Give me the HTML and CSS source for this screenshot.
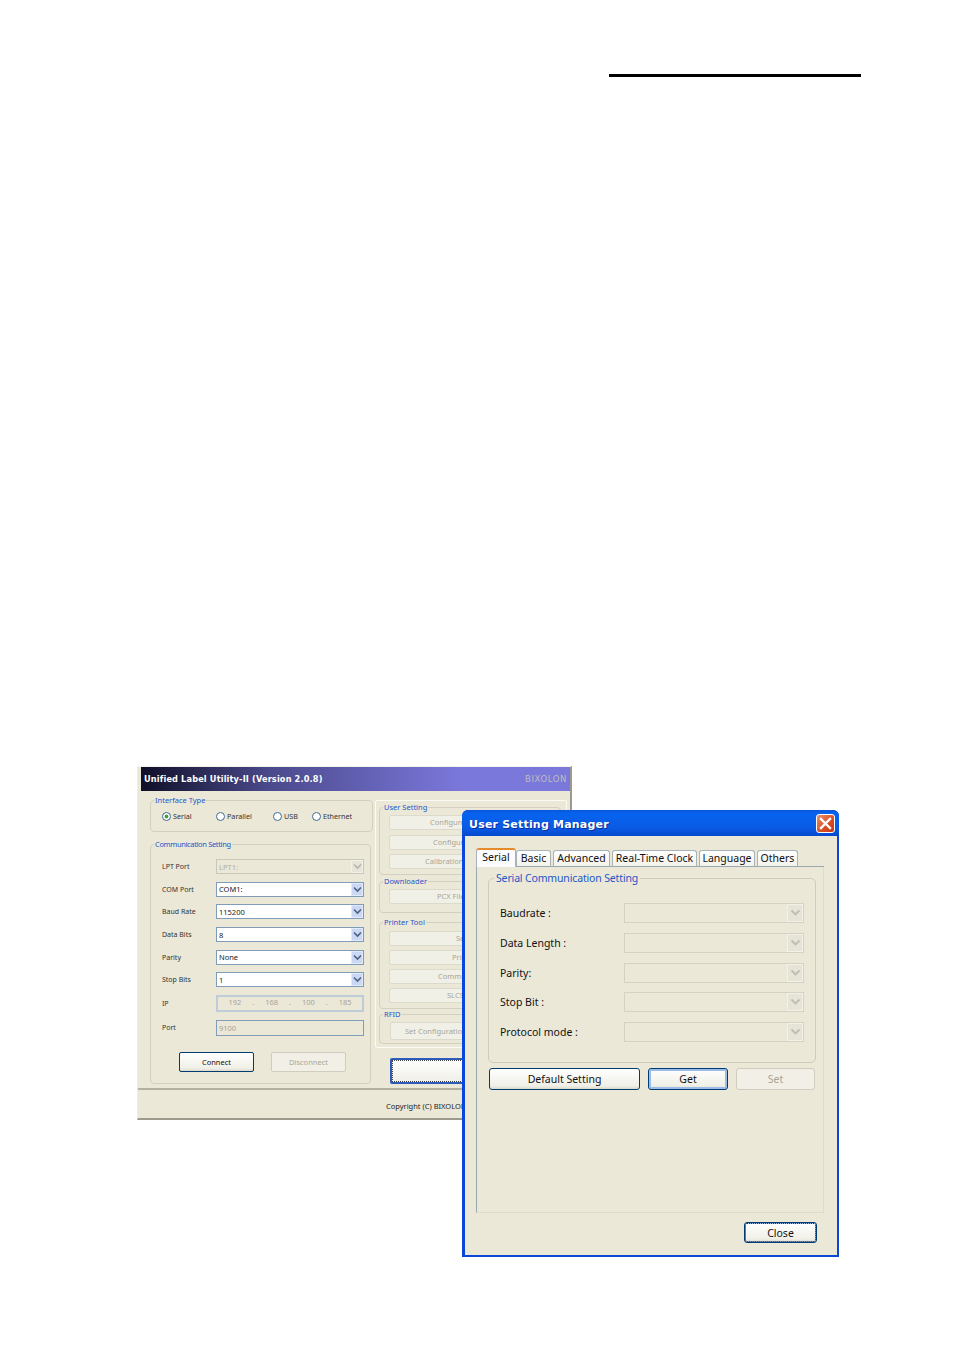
FILE: index.html
```html
<!DOCTYPE html>
<html lang="en">
<head>
<meta charset="utf-8">
<title>Unified Label Utility-II</title>
<link rel="stylesheet" href="styles.css">
</head>
<body>
<div class="page">
  <div class="rule"></div>

  <section class="win-back">
    <header class="back-title"><span>Unified Label Utility-II (Version 2.0.8)</span><span class="brand">BIXOLON</span></header>
    <div class="back-body">
      <div class="back-left">
        <fieldset class="grp grp-iface">
          <legend>Interface Type</legend>
          <div class="radios">
            <label class="radio r-serial"><i class="dot on"></i>Serial</label>
            <label class="radio r-par"><i class="dot"></i>Parallel</label>
            <label class="radio r-usb"><i class="dot"></i>USB</label>
            <label class="radio"><i class="dot"></i>Ethernet</label>
          </div>
        </fieldset>
        <fieldset class="grp grp-comm">
          <legend>Communication Setting</legend>
          <div class="form">
            <span class="lb">LPT Port</span>
            <div class="cb dis"><span>LPT1:</span><b class="drop"><svg width="9" height="7" viewBox="0 0 9 7"><path d="M1 1.5l3.5 3.5 3.5-3.5" fill="none" stroke="#b4b4aa" stroke-width="1.6"/></svg></b></div>
            <span class="lb">COM Port</span>
            <div class="cb"><span>COM1:</span><b class="drop"><svg width="9" height="7" viewBox="0 0 9 7"><path d="M1 1.5l3.5 3.5 3.5-3.5" fill="none" stroke="#4d6185" stroke-width="1.6"/></svg></b></div>
            <span class="lb">Baud Rate</span>
            <div class="cb"><span>115200</span><b class="drop"><svg width="9" height="7" viewBox="0 0 9 7"><path d="M1 1.5l3.5 3.5 3.5-3.5" fill="none" stroke="#4d6185" stroke-width="1.6"/></svg></b></div>
            <span class="lb">Data Bits</span>
            <div class="cb"><span>8</span><b class="drop"><svg width="9" height="7" viewBox="0 0 9 7"><path d="M1 1.5l3.5 3.5 3.5-3.5" fill="none" stroke="#4d6185" stroke-width="1.6"/></svg></b></div>
            <span class="lb">Parity</span>
            <div class="cb"><span>None</span><b class="drop"><svg width="9" height="7" viewBox="0 0 9 7"><path d="M1 1.5l3.5 3.5 3.5-3.5" fill="none" stroke="#4d6185" stroke-width="1.6"/></svg></b></div>
            <span class="lb">Stop Bits</span>
            <div class="cb"><span>1</span><b class="drop"><svg width="9" height="7" viewBox="0 0 9 7"><path d="M1 1.5l3.5 3.5 3.5-3.5" fill="none" stroke="#4d6185" stroke-width="1.6"/></svg></b></div>
            <span class="lb">IP</span>
            <div class="tx ip"><span>192</span><span>.</span><span>168</span><span>.</span><span>100</span><span>.</span><span>185</span></div>
            <span class="lb">Port</span>
            <div class="tx"><span>9100</span></div>
          </div>
          <div class="conn">
            <button class="xbtn primary" type="button">Connect</button>
            <button class="xbtn off" type="button">Disconnect</button>
          </div>
        </fieldset>
      </div>
      <div class="back-right">
        <div class="panel">
          <fieldset class="grp g-user">
            <legend>User Setting</legend>
            <div class="rbtn p40 mb5">Configure</div>
            <div class="rbtn p43 mb4">Configur</div>
            <div class="rbtn p35">Calibration S</div>
          </fieldset>
          <fieldset class="grp g-down">
            <legend>Downloader</legend>
            <div class="rbtn p47">PCX File</div>
          </fieldset>
          <fieldset class="grp g-tool">
            <legend>Printer Tool</legend>
            <div class="rbtn p66 mb4">Se</div>
            <div class="rbtn p62 mb4">Prin</div>
            <div class="rbtn p48 mb4">Commu</div>
            <div class="rbtn p57">SLCS</div>
          </fieldset>
          <fieldset class="grp g-rfid">
            <legend>RFID</legend>
            <div class="rbtn p14 tall">Set Configuration</div>
          </fieldset>
        </div>
        <div class="bigbtn"></div>
      </div>
    </div>
    <footer class="back-foot">Copyright (C) BIXOLON</footer>
  </section>

  <section class="win-dlg">
    <header class="dlg-title">
      <span>User Setting Manager</span>
      <button class="x" type="button" aria-label="Close"><svg width="13" height="13" viewBox="0 0 13 13"><path d="M2 2l9 9M11 2l-9 9" stroke="#fff" stroke-width="2.4" stroke-linecap="square"/></svg></button>
    </header>
    <div class="dlg-body">
      <nav class="tabs">
        <span class="tab active">Serial</span>
        <span class="tab t-basic">Basic</span>
        <span class="tab t-adv">Advanced</span>
        <span class="tab t-rtc">Real-Time Clock</span>
        <span class="tab t-lang">Language</span>
        <span class="tab t-oth">Others</span>
      </nav>
      <div class="pane">
        <fieldset class="dgrp">
          <legend>Serial Communication Setting</legend>
          <div class="dform">
            <span class="dl">Baudrate :</span>
            <div class="dcb"><b class="ddrop"><svg width="11" height="8" viewBox="0 0 11 8"><path d="M1.5 1.5l4 4 4-4" fill="none" stroke="#bdbdb3" stroke-width="1.8"/></svg></b></div>
            <span class="dl">Data Length :</span>
            <div class="dcb"><b class="ddrop"><svg width="11" height="8" viewBox="0 0 11 8"><path d="M1.5 1.5l4 4 4-4" fill="none" stroke="#bdbdb3" stroke-width="1.8"/></svg></b></div>
            <span class="dl">Parity:</span>
            <div class="dcb"><b class="ddrop"><svg width="11" height="8" viewBox="0 0 11 8"><path d="M1.5 1.5l4 4 4-4" fill="none" stroke="#bdbdb3" stroke-width="1.8"/></svg></b></div>
            <span class="dl">Stop Bit :</span>
            <div class="dcb"><b class="ddrop"><svg width="11" height="8" viewBox="0 0 11 8"><path d="M1.5 1.5l4 4 4-4" fill="none" stroke="#bdbdb3" stroke-width="1.8"/></svg></b></div>
            <span class="dl">Protocol mode :</span>
            <div class="dcb"><b class="ddrop"><svg width="11" height="8" viewBox="0 0 11 8"><path d="M1.5 1.5l4 4 4-4" fill="none" stroke="#bdbdb3" stroke-width="1.8"/></svg></b></div>
          </div>
        </fieldset>
        <div class="dbtns">
          <button class="dbtn primary w-def" type="button">Default Setting</button>
          <button class="dbtn primary focus w-get" type="button">Get</button>
          <button class="dbtn off w-set" type="button">Set</button>
        </div>
      </div>
      <div class="dlg-foot">
        <button class="dbtn primary dotted w-close" type="button">Close</button>
      </div>
    </div>
  </section>
</div>
</body>
</html>
```
FILE: styles.css
```css
* { box-sizing: border-box; }
html, body { margin: 0; background: #fff; }
.page { position: relative; width: 955px; height: 1350px; overflow: hidden; padding: 74px 94px 0 609px; font-family: "Noto Sans", "DejaVu Sans", sans-serif; }
.rule { height: 3px; background: #000; }

/* back window */
.win-back { position: absolute; left: 137px; top: 766px; width: 435px; height: 354px; background: #ebe8d8; border-top: 1px solid #f4f3ea; border-left: 1px solid #f1efe3; border-right: 2px solid #9c9a8c; border-bottom: 2px solid #9c9a8c; font-size: 7px; color: #333; }
.back-title { margin: 0 0 0 3px; height: 24px; padding: 0 3px; display: flex; align-items: center; justify-content: space-between; background: linear-gradient(90deg, #0f0f28 0%, #4b4a8c 30%, #7b78dc 75%); color: #fff; font: bold 8.2px "DejaVu Sans", sans-serif; letter-spacing: .15px; }
.brand { color: #bcbcbc; font-weight: normal; font-size: 8.5px; letter-spacing: .6px; }
.back-body { display: flex; padding: 5px 0 0 12px; height: 299px; border-bottom: 2px solid #b3b1a2; }
.back-left { width: 224px; }
.back-right { width: 192px; margin-left: 1px; padding-top: 4px; }
.back-foot { padding: 11px 0 0 248px; font-size: 7.5px; color: #222; }

.grp { margin: 0; padding: 0; border: 1px solid #d3d0bf; border-radius: 4px; min-width: 0; }
.grp legend { margin-left: 3px; padding: 0 1px; color: #1f55c8; font-size: 7.5px; line-height: 9px; }
.grp-iface { width: 223px; height: 36px; }
.radios { display: flex; padding: 6px 0 0 11px; align-items: center; }
.radio { display: flex; align-items: center; gap: 2px; font-size: 7.2px; }
.r-serial { width: 54px; }
.r-par { width: 57px; }
.r-usb { width: 39px; }
.dot { width: 9px; height: 9px; border: 1px solid #3f6c94; border-radius: 50%; background: #fff; display: block; }
.dot.on { background: radial-gradient(circle, #3aa63a 0 1.7px, #fff 2.2px); }
.grp-comm { width: 221px; height: 244px; margin-top: 8px; }
.grp-comm legend { letter-spacing: -.35px; }
.form { display: grid; grid-template-columns: 54px 148px; grid-template-rows: 15px 15px 15px 15px 15px 15px 17px 16px; row-gap: 7.7px; padding: 10px 0 0 11px; align-items: center; font-size: 7px; }
.cb { height: 15px; display: flex; align-items: center; justify-content: space-between; background: #fff; border: 1px solid #7f9db9; padding-left: 2px; font-size: 7.5px; color: #222; }
.cb.dis { background: #ebe8d8; border-color: #c9c7ba; color: #aeaca0; }
.drop { width: 12px; height: 13px; display: flex; align-items: center; justify-content: center; background: #cad8f4; border: 1px solid #e3eafb; }
.cb.dis .drop { background: #e6e4d6; border-color: #f2f1e8; }
.tx { height: 100%; display: flex; align-items: center; background: #ebe8d8; border: 1px solid #7f9db9; padding: 0 2px; color: #a5a398; font-size: 7.5px; }
.ip { justify-content: space-around; padding: 0 5px 3px; border: 2px solid #bfcdd9; }
.conn { display: flex; gap: 17px; padding: 16px 0 0 28px; }
.xbtn { width: 75px; height: 20px; padding: 0; border-radius: 2px; font: 7.5px "Noto Sans", sans-serif; }
.primary { border: 1px solid #003c74; background: linear-gradient(#fff, #f0efe7 85%, #dcd8c9); color: #111; }
.off { border: 1px solid #cfcdbe; background: #f2f0e6; color: #a7a598; }

.panel { width: 192px; height: 248px; border: 1px solid #fbfbf6; border-radius: 2px; padding: 2px 5px 0 3px; }
.g-user { height: 72px; }
.g-down { height: 36px; margin-top: 2px; }
.g-tool { height: 91px; margin-top: 5px; padding-top: 1px; }
.g-rfid { height: 34px; margin-top: 1px; }
.rbtn { height: 15px; margin: 3px 7px 0 9px; background: #f1f0e6; border: 1px solid #dcdacb; border-radius: 2px; color: #a7a598; font-size: 7.5px; line-height: 13px; white-space: nowrap; overflow: hidden; }
.rbtn.tall { height: 18px; line-height: 16px; margin-left: 10px; }
.mb5 { margin-bottom: 5px; }
.mb4 { margin-bottom: 4px; }
.rbtn.mb4 + .rbtn, .rbtn.mb5 + .rbtn { margin-top: 0; }
.p14 { padding-left: 14px; }
.p35 { padding-left: 35px; }
.p40 { padding-left: 40px; }
.p43 { padding-left: 43px; }
.p47 { padding-left: 47px; }
.p48 { padding-left: 48px; }
.p57 { padding-left: 57px; }
.p62 { padding-left: 62px; }
.p66 { padding-left: 66px; }
.bigbtn { width: 165px; height: 26px; margin: 10px 0 0 15px; border: 2px solid #2c5bb8; border-radius: 2px; background: linear-gradient(#fff, #efeee6); outline: 1px dotted #444; outline-offset: -3px; }

/* dialog */
.win-dlg { position: absolute; left: 462px; top: 810px; width: 377px; height: 447px; background: #0a47d8; border-radius: 6px 6px 0 0; padding: 0 2px 2px; display: flex; flex-direction: column; }
.dlg-title { height: 26px; margin: 0 -2px; padding: 2px 4px 0 7px; display: flex; align-items: center; justify-content: space-between; background: linear-gradient(#0a56dc, #0663ee 15%, #0a5ae4 70%, #0648cf); border-radius: 6px 6px 0 0; color: #fff; font: bold 11px "DejaVu Sans", sans-serif; letter-spacing: .2px; text-shadow: 1px 1px #0a2f9a; }
.x { width: 19px; height: 19px; margin-top: -2px; padding: 0; display: flex; align-items: center; justify-content: center; background: linear-gradient(135deg, #e8916e, #d94c23 60%, #c63a15); border: 1px solid #fff; border-radius: 3px; }
.dlg-body { flex: 1; background: #ebe8d8; border-left: 1px solid #0a47d8; padding: 12px 13px 0 11px; font: 10.5px "Noto Sans", sans-serif; color: #111; }
.tabs { display: flex; gap: 2px; height: 19px; align-items: flex-end; border-bottom: 1px solid #9aa7ae; }
.tab { height: 17px; margin-bottom: -1px; padding: 0; text-align: center; border: 1px solid #a7b3b9; border-bottom: 1px solid #9aa7ae; border-radius: 3px 3px 0 0; background: linear-gradient(#fff, #f3f2ea); font-size: 10.5px; line-height: 15px; white-space: nowrap; }
.tab.active { width: 40px; height: 19px; margin-right: -2px; background: #fcfcfe; border-top: 2px solid #e68b2c; border-bottom: 0; }
.t-basic { width: 35px; }
.t-adv { width: 57px; }
.t-rtc { width: 85px; }
.t-lang { width: 56px; }
.t-oth { width: 41px; }
.pane { height: 346px; border-left: 1px solid #9aa7ae; border-bottom: 1px solid #dedbca; border-right: 1px solid #dedbca; padding: 5px 0 0 11px; width: 348px; }
.dgrp { width: 328px; height: 191px; margin: 0; padding: 0; border: 1px solid #cfccba; border-radius: 5px; }
.dgrp legend { margin-left: 5px; padding: 0 2px; color: #2457c5; font-size: 10.5px; line-height: 13px; letter-spacing: -.15px; }
.dform { display: grid; grid-template-columns: 124px 180px; grid-template-rows: repeat(5, 20px); row-gap: 9.75px; padding: 18px 0 0 11px; align-items: center; }
.dl { font-size: 10.5px; }
.dcb { height: 20px; display: flex; justify-content: flex-end; border: 1px solid #d5d2c1; }
.ddrop { width: 16px; display: flex; align-items: center; justify-content: center; background: #e6e4d7; border: 1px solid #f3f2ea; }
.dbtns { display: flex; gap: 8px; padding: 5px 0 0 1px; }
.dbtn { height: 22px; padding: 0; border-radius: 3px; font: 10.5px "Noto Sans", sans-serif; }
.focus { box-shadow: inset 0 0 0 2px #9dbce8; }
.dotted { box-shadow: inset 0 0 0 1px #9dbce8; outline: 1px dotted #333; outline-offset: -2px; }
.w-def { width: 151px; }
.w-get { width: 80px; }
.w-set { width: 79px; }
.dlg-foot { display: flex; justify-content: flex-end; padding: 9px 7px 0 0; }
.w-close { width: 73px; height: 21px; }
```
